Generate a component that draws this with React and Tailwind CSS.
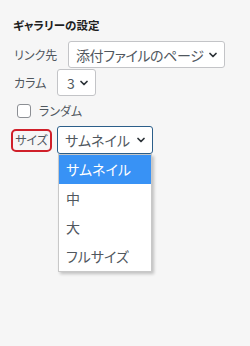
import { ChevronDown } from "lucide-react";

const font = "font-['Yu_Gothic_UI','Noto_Sans_CJK_JP',sans-serif] [font-feature-settings:'palt']";

const Select = ({ value, className = "" }) => (
  <div
    className={`flex items-center justify-between bg-white rounded-[3px] border pl-[7px] pr-[5px] text-[14px] text-[#50575e] whitespace-nowrap overflow-hidden ${className}`}
  >
    <span className="leading-none">{value}</span>
    <ChevronDown className="w-[12px] h-[12px] shrink-0 text-[#2c3338] ml-[2px]" strokeWidth={3.5} />
  </div>
);

const options = ["サムネイル", "中", "大", "フルサイズ"];

const App = () => {
  return (
    <div className={`w-[250px] h-[346px] bg-[#f6f6f6] ${font} text-[#50575e]`}>
      <div className="pt-[17px] pl-[13px]">
        <h2 className="text-[11.5px] font-bold text-[#1e1e1e] leading-[16px]">ギャラリーの設定</h2>

        {/* リンク先 */}
        <div className="flex items-center mt-[8px]">
          <span className="w-[55px] pl-[1px] text-[12px]">リンク先</span>
          <Select value="添付ファイルのページ" className="w-[157px] h-[27px] border-[#c3c4c7] tracking-[-0.4px]" />
        </div>

        {/* カラム */}
        <div className="flex items-center mt-[1px]">
          <span className="w-[44px] pl-[1px] text-[12px]">カラム</span>
          <Select value="3" className="w-[39px] h-[27px] border-[#c3c4c7] pl-[9px]" />
        </div>

        {/* ランダム */}
        <div className="flex items-center mt-[8px] pl-[4px]">
          <span className="w-[14px] h-[14px] bg-white border border-[#8c8f94] rounded-[3px]" />
          <span className="ml-[8px] text-[12px] leading-none">ランダム</span>
        </div>

        {/* サイズ */}
        <div className="flex items-center mt-[8px] -ml-[2px]">
          <span className="w-[41px] h-[23px] flex items-center justify-center border-2 border-[#d0202a] rounded-[5px] text-[12px]">
            サイズ
          </span>
          <div className="relative ml-[5px]">
            <Select value="サムネイル" className="w-[96px] h-[28px] border-[#2c5f8a]" />
            <div className="absolute left-[1px] top-[28px] w-[94px] bg-white border border-[#c8c8c8] shadow-[2px_2px_3px_rgba(0,0,0,0.22)] z-10">
              {options.map((opt, i) => (
                <div
                  key={opt}
                  className={`h-[29px] flex items-center pl-[7px] text-[14px] whitespace-nowrap ${
                    i === 0 ? "bg-[#3892f5] text-white" : "text-[#50575e]"
                  }`}
                >
                  {opt}
                </div>
              ))}
            </div>
          </div>
        </div>
      </div>
    </div>
  );
};

export default App;
